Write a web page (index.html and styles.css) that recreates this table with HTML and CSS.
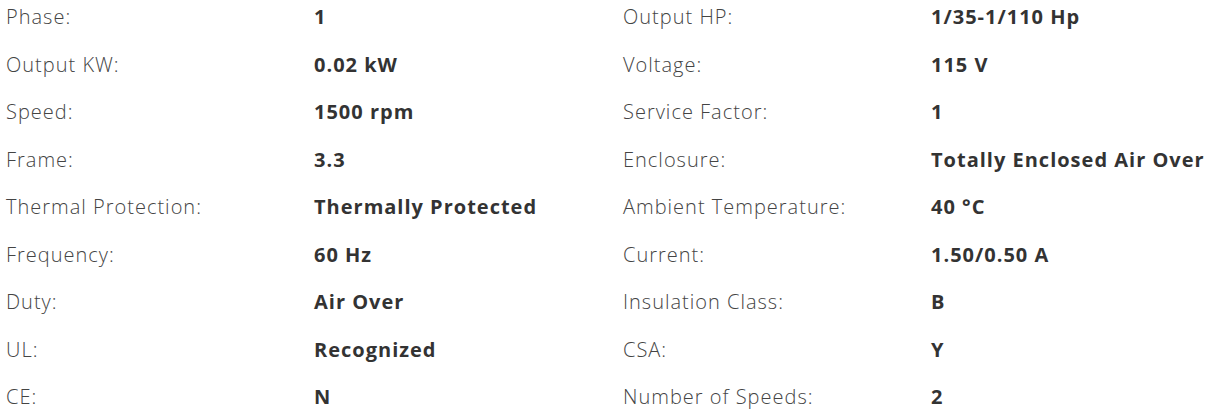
FILE: index.html
```html
<!DOCTYPE html>
<html>
<head>
<meta charset="utf-8">
<link rel="stylesheet" href="styles.css">
</head>
<body>
<div class="specs">
  <div class="row"><span class="label">Phase:</span><span class="value">1</span></div>
  <div class="row"><span class="label">Output HP:</span><span class="value">1/35-1/110 Hp</span></div>
  <div class="row"><span class="label">Output KW:</span><span class="value">0.02 kW</span></div>
  <div class="row"><span class="label">Voltage:</span><span class="value">115 V</span></div>
  <div class="row"><span class="label">Speed:</span><span class="value">1500 rpm</span></div>
  <div class="row"><span class="label">Service Factor:</span><span class="value">1</span></div>
  <div class="row"><span class="label">Frame:</span><span class="value">3.3</span></div>
  <div class="row"><span class="label">Enclosure:</span><span class="value">Totally Enclosed Air Over</span></div>
  <div class="row"><span class="label">Thermal Protection:</span><span class="value">Thermally Protected</span></div>
  <div class="row"><span class="label">Ambient Temperature:</span><span class="value">40 °C</span></div>
  <div class="row"><span class="label">Frequency:</span><span class="value">60 Hz</span></div>
  <div class="row"><span class="label">Current:</span><span class="value">1.50/0.50 A</span></div>
  <div class="row"><span class="label">Duty:</span><span class="value">Air Over</span></div>
  <div class="row"><span class="label">Insulation Class:</span><span class="value">B</span></div>
  <div class="row"><span class="label">UL:</span><span class="value">Recognized</span></div>
  <div class="row"><span class="label">CSA:</span><span class="value">Y</span></div>
  <div class="row"><span class="label">CE:</span><span class="value">N</span></div>
  <div class="row"><span class="label">Number of Speeds:</span><span class="value">2</span></div>
</div>
</body>
</html>
```
FILE: styles.css
```css
html, body {
  margin: 0;
  padding: 0;
  background: #fff;
  overflow: hidden;
}
.specs {
  display: grid;
  grid-template-columns: 617px 617px;
  padding-left: 6px;
  margin-top: -7px;
  font-family: "Open Sans", sans-serif;
  font-size: 20px;
  letter-spacing: 1px;
}
.row {
  display: grid;
  grid-template-columns: 308px auto;
  height: 47.5px;
  align-items: center;
  white-space: nowrap;
}
.label {
  color: #444;
  font-weight: 300;
}
.value {
  color: #333;
  font-weight: 700;
}
```
